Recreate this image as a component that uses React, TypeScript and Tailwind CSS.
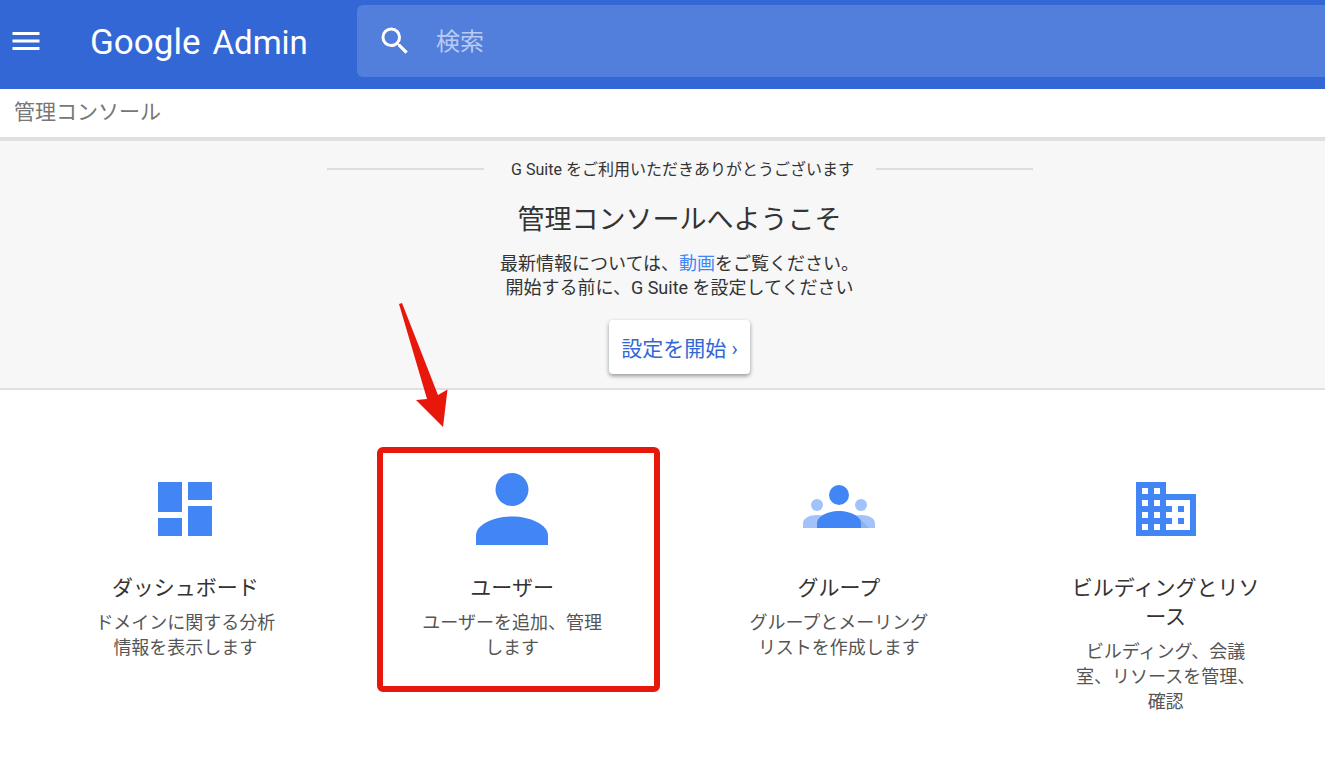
import type { ReactNode } from "react";

function DashboardIcon() {
  return (
    <svg viewBox="0 0 24 24" className="size-18 fill-[#4285f4]" aria-hidden="true">
      <path d="M3 13h8V3H3v10zm0 8h8v-6H3v6zm10 0h8V11h-8v10zm0-18v6h8V3h-8z" />
    </svg>
  );
}

function UserIcon() {
  return (
    <svg viewBox="0 0 72 72" className="size-18 fill-[#4285f4]" aria-hidden="true">
      <circle cx="36" cy="16.5" r="16.5" />
      <path d="M0 72v-9.500C0 51.500 18 43.500 36 43.500s36 8 36 19V72z" />
    </svg>
  );
}

function GroupsIcon() {
  return (
    <svg viewBox="0 0 72 72" className="size-18 fill-[#4285f4]" aria-hidden="true">
      <g className="fill-[#a1c2fa]">
        <circle cx="14" cy="32" r="6" />
        <circle cx="58" cy="32" r="6" />
        <path d="M0 55v-4.500C0 45 6.500 42 14 42s14 3 14 8.500V55z" />
        <path d="M44 55v-4.500C44 45 50.500 42 58 42s14 3 14 8.500V55z" />
      </g>
      <path d="M56 45l10 10h-8z" className="fill-[#8fb2ec]" />
      <circle cx="36" cy="22" r="10" />
      <path d="M14 55v-4.500C14 43 25 38 36 38s22 5 22 12.500V55z" />
    </svg>
  );
}

function BuildingIcon() {
  return (
    <svg viewBox="0 0 24 24" className="size-18 fill-[#4285f4]" aria-hidden="true">
      <path d="M12 7V3H2v18h20V7H12zM6 19H4v-2h2v2zm0-4H4v-2h2v2zm0-4H4V9h2v2zm0-4H4V5h2v2zm4 12H8v-2h2v2zm0-4H8v-2h2v2zm0-4H8V9h2v2zm0-4H8V5h2v2zm10 12h-8v-2h2v-2h-2v-2h2v-2h-2V9h8v10zm-2-8h-2v2h2v-2zm0 4h-2v2h2v-2z" />
    </svg>
  );
}

function Highlight() {
  return (
    <>
      <span className="pointer-events-none absolute -top-[26px] -bottom-8 left-7 right-4 rounded-md border-6 border-[#e8170c]" />
      <svg
        viewBox="0 0 50 126"
        className="pointer-events-none absolute -top-[171px] left-[49px] h-[126px] w-[50px] fill-[#e8170c]"
        aria-hidden="true"
      >
        <path d="M1 2l3-1 36 92 9.500-5.500L45 125 18 98l11-1z" />
      </svg>
    </>
  );
}

type Item = { title: string; text: string; icon: ReactNode; highlighted?: boolean };

const items: Item[] = [
  { title: "ダッシュボード", text: "ドメインに関する分析情報を表示します", icon: <DashboardIcon /> },
  { title: "ユーザー", text: "ユーザーを追加、管理します", icon: <UserIcon />, highlighted: true },
  { title: "グループ", text: "グループとメーリングリストを作成します", icon: <GroupsIcon /> },
  { title: "ビルディングとリソース", text: "ビルディング、会議室、リソースを管理、確認", icon: <BuildingIcon /> },
];

function ItemCard({ item }: { item: Item }) {
  return (
    <li className="relative self-start">
      <a href="#" className="flex flex-col items-center text-center">
        {item.icon}
        <h2 className="mt-[29px] w-[192px] text-[21px] leading-[29px] text-[#333] [line-break:loose]">{item.title}</h2>
        <p className="mt-[7px] w-[184px] text-lg leading-[25px] text-[#555]">{item.text}</p>
      </a>
      {item.highlighted && <Highlight />}
    </li>
  );
}

export default function App() {
  return (
    <div
      lang="ja"
      className="min-h-screen overflow-x-hidden bg-white font-[Roboto,'Noto_Sans_CJK_JP',sans-serif] text-[#333]"
    >
      <header className="flex items-center bg-[#3367d6] pt-[5px] pb-3 pl-2 text-white">
        <button type="button" aria-label="メニュー" className="shrink-0">
          <svg viewBox="0 0 24 24" className="size-9 fill-current" aria-hidden="true">
            <path d="M3 18h18v-2H3v2zm0-5h18v-2H3v2zm0-7v2h18V6H3z" />
          </svg>
        </button>
        <a href="#" className="ml-[46px] flex w-[267px] shrink-0 items-baseline gap-3 pt-[3px]">
          <span className="text-[35px] leading-10">Google</span>
          <span className="text-[33px] leading-10">Admin</span>
        </a>
        <label className="flex h-18 flex-1 items-center rounded-l-md bg-white/16 pl-5">
          <svg viewBox="0 0 24 24" className="size-9 shrink-0 fill-current" aria-hidden="true">
            <path d="M15.500 14h-.79l-.28-.27A6.471 6.471 0 0 0 16 9.500 6.500 6.500 0 1 0 9.500 16c1.610 0 3.090-.59 4.230-1.570l.27.28v.79l5 4.990L20.490 19l-4.990-5zm-6 0C7.010 14 5 11.990 5 9.500S7.010 5 9.500 5 14 7.010 14 9.500 11.990 14 9.500 14z" />
          </svg>
          <input
            type="search"
            aria-label="検索"
            placeholder="検索"
            className="ml-[23px] min-w-0 flex-1 bg-transparent pt-0.5 text-2xl outline-none placeholder:text-white/60"
          />
        </label>
      </header>

      <nav className="border-b-4 border-[#e0e0e0] px-3.5 pt-[7px] pb-[9px] text-[21px] leading-8 text-[#777]">
        管理コンソール
      </nav>

      <main>
        <section className="flex flex-col items-center border-b-2 border-[#e0e0e0] bg-[#f7f7f7] pt-4 pb-3.5 pl-[34px] text-center">
          <div className="flex w-full max-w-[706px] items-center">
            <span className="h-0.5 w-[157px] bg-[#ddd]" />
            <p className="flex-1 pt-0.5 pl-1.5 text-base leading-[22px]">G Suite をご利用いただきありがとうございます</p>
            <span className="h-0.5 w-[157px] bg-[#ddd]" />
          </div>
          <h1 className="mt-[21px] text-[27px] leading-9">管理コンソールへようこそ</h1>
          <p className="mt-3.5 text-lg leading-6">
            最新情報については、
            <a href="#" className="text-[#4285f4]">
              動画
            </a>
            をご覧ください。
            <br />
            開始する前に、G Suite を設定してください
          </p>
          <button
            type="button"
            className="mt-5 h-[54px] rounded-sm bg-white px-3 pt-1.5 text-[21px] text-[#3367d6] shadow-[0_2px_4px_rgba(0,0,0,0.4)]"
          >
            設定を開始 ›
          </button>
        </section>

        <ul className="-mr-1 grid grid-cols-4 items-start pt-[83px] pb-10 pl-[22px]">
          {items.map((item) => (
            <ItemCard key={item.title} item={item} />
          ))}
        </ul>
      </main>
    </div>
  );
}
